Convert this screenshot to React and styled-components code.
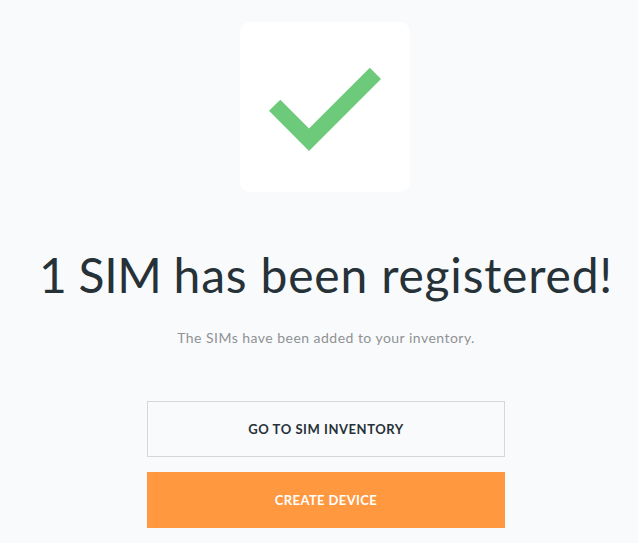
import React from "react";
import styled, { createGlobalStyle } from "styled-components";

const GlobalStyle = createGlobalStyle`
  *, *::before, *::after { box-sizing: border-box; }
  body { margin: 0; background: #f9fafc; overflow: hidden; }
`;

const Page = styled.main`
  width: 638px;
  height: 543px;
  padding: 22px 0 0 14px;
  display: flex;
  flex-direction: column;
  align-items: center;
  background: #f9fafc;
  color: #263238;
  font-family: Lato, sans-serif;
`;

const CheckTile = styled.div`
  width: 170px;
  height: 170px;
  margin-right: 2px;
  border-radius: 10px;
  background: #fff;
  svg { display: block; }
`;

const Title = styled.h1`
  margin: 51px 0 0;
  font-size: 48px;
  line-height: 64px;
  font-weight: 400;
  letter-spacing: 0.8px;
  white-space: nowrap;
`;

const Count = styled.span`
  letter-spacing: -0.3px;
`;

const Message = styled.p`
  margin: 21px 0 0;
  font-size: 14px;
  line-height: 20px;
  letter-spacing: 0.47px;
  color: #8f9294;
`;

const Actions = styled.div`
  width: 358px;
  margin-top: 53px;
  display: flex;
  flex-direction: column;
  gap: 15px;
`;

const Button = styled.button`
  height: 56px;
  padding: 0;
  border: 1px solid ${(p) => (p.$primary ? "#ff983f" : "#d5d7d9")};
  background: ${(p) => (p.$primary ? "#ff983f" : "transparent")};
  color: ${(p) => (p.$primary ? "#fff" : "#263238")};
  font: 700 13px/20px Lato, sans-serif;
  letter-spacing: ${(p) => (p.$primary ? "0.4px" : "0.55px")};
  text-transform: uppercase;
`;

export default function App() {
  return (
    <Page>
      <GlobalStyle />
      <CheckTile>
        <svg width="170" height="170" viewBox="0 0 170 170" aria-hidden="true">
          <path d="M29 88.8 40.3 77.8 69 106.5 129.8 45.8 141 57 69 129Z" fill="#6cca7a" />
        </svg>
      </CheckTile>
      <Title><Count>1 SIM </Count>has been registered!</Title>
      <Message>The SIMs have been added to your inventory.</Message>
      <Actions>
        <Button>Go to SIM inventory</Button>
        <Button $primary>Create device</Button>
      </Actions>
    </Page>
  );
}
